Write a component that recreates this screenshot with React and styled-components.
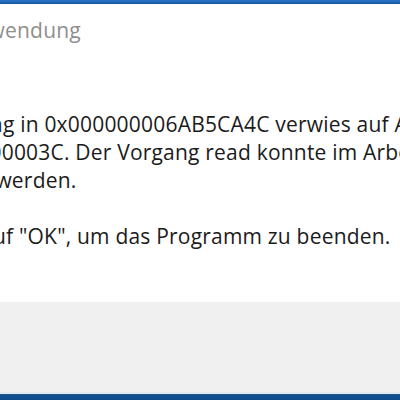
import React from "react";
import styled, { createGlobalStyle } from "styled-components";

const GlobalStyle = createGlobalStyle`
  html, body {
    margin: 0;
    padding: 0;
    background: #ffffff;
  }
`;

// left edges are cut off by the crop, so each line gets its own shift
const lines = [
  { text: "Anweisung in 0x000000006AB5CA4C verwies auf Arbeitsspeicher in", shift: -94 },
  { text: "0x000000000000003C. Der Vorgang read konnte im Arbeitsspeicher nicht", shift: -156 },
  { text: "durchgeführt werden.", shift: -142 },
  { text: "", shift: 0 },
  { text: "Klicken Sie auf \"OK\", um das Programm zu beenden.", shift: -130 },
];

const App = () => {
  return (
    <>
      <GlobalStyle />
      <Window>
        <TopBorder />
        <TitleBar>
          <TitleText>Anwendung</TitleText>
        </TitleBar>
        <MessageBody>
          {lines.map((line, i) => (
            <MessageLine key={i} $shift={line.shift}>
              {line.text || "\u00a0"}
            </MessageLine>
          ))}
        </MessageBody>
        <ButtonArea />
        <Taskbar />
      </Window>
    </>
  );
};

const Window = styled.div`
  width: 400px;
  height: 400px;
  display: flex;
  flex-direction: column;
  overflow: hidden;
  background: #ffffff;
  font-family: "Open Sans", "Noto Sans", sans-serif;
`;

const TopBorder = styled.div`
  height: 4px;
  flex-shrink: 0;
  background: linear-gradient(180deg, #2a76cc 0%, #1f63b0 60%, #1a5594 100%);
`;

const TitleBar = styled.div`
  padding-top: 12px;
  height: 28px;
  flex-shrink: 0;
  overflow: hidden;
`;

const TitleText = styled.div`
  margin-left: -38px;
  font-size: 21px;
  letter-spacing: 0.2px;
  line-height: 28px;
  color: #8e8e8e;
  white-space: nowrap;
`;

const MessageBody = styled.div`
  flex: 1;
  padding-top: 66px;
  overflow: hidden;
`;

const MessageLine = styled.div`
  margin-left: ${(p) => p.$shift}px;
  font-size: 21px;
  letter-spacing: 0.2px;
  line-height: 28px;
  color: #1b1b1b;
  white-space: nowrap;
`;

const ButtonArea = styled.div`
  height: 90px;
  flex-shrink: 0;
  background: #f0f0f0;
`;

const Taskbar = styled.div`
  height: 6px;
  flex-shrink: 0;
  border-top: 2px solid #e2eaf2;
  background: linear-gradient(180deg, #2c5e8a 0px, #124f8e 1px, #0f4c8e 100%);
`;

export default App;
